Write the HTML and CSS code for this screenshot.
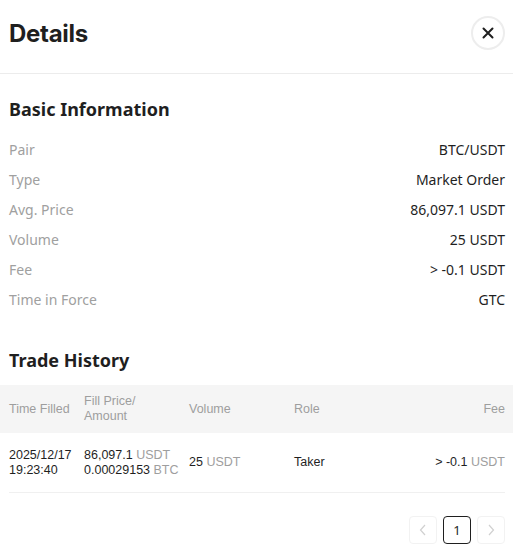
FILE: index.html
```html
<!DOCTYPE html>
<html lang="en">
<head>
    <meta charset="utf-8">
    <title>Details</title>
    <link rel="stylesheet" href="styles.css">
</head>
<body>
<div class="panel">
    <div class="panel-header">
        <h1 class="panel-title">Details</h1>
        <button class="close-btn" aria-label="Close">
            <svg width="14" height="14" viewBox="0 0 14 14">
                <path d="M2.5 2.5 L11.5 11.5 M11.5 2.5 L2.5 11.5" stroke="#1f1f1f" stroke-width="2" stroke-linecap="round"/>
            </svg>
        </button>
    </div>

    <div class="panel-body">
        <h2 class="section-title">Basic Information</h2>
        <div class="info-list">
            <div class="info-row"><span class="info-label">Pair</span><span class="info-value">BTC/USDT</span></div>
            <div class="info-row"><span class="info-label">Type</span><span class="info-value">Market Order</span></div>
            <div class="info-row"><span class="info-label">Avg. Price</span><span class="info-value">86,097.1 USDT</span></div>
            <div class="info-row"><span class="info-label">Volume</span><span class="info-value">25 USDT</span></div>
            <div class="info-row"><span class="info-label">Fee</span><span class="info-value">&gt; -0.1 USDT</span></div>
            <div class="info-row"><span class="info-label">Time in Force</span><span class="info-value">GTC</span></div>
        </div>

        <h2 class="section-title history-title">Trade History</h2>
    </div>

    <div class="trade-table">
        <div class="table-head">
            <div class="cell">Time Filled</div>
            <div class="cell">Fill Price/<br>Amount</div>
            <div class="cell">Volume</div>
            <div class="cell">Role</div>
            <div class="cell cell-right">Fee</div>
        </div>
        <div class="table-row">
            <div class="cell">2025/12/17<br>19:23:40</div>
            <div class="cell">86,097.1 <span class="unit">USDT</span><br>0.00029153 <span class="unit">BTC</span></div>
            <div class="cell">25 <span class="unit">USDT</span></div>
            <div class="cell">Taker</div>
            <div class="cell cell-right">&gt; -0.1 <span class="unit">USDT</span></div>
        </div>
    </div>

    <div class="pager">
        <button class="page-btn" disabled>
            <svg width="8" height="12" viewBox="0 0 8 12"><path d="M6 1 L1.5 6 L6 11" fill="none" stroke="#d0d0d0" stroke-width="1.2"/></svg>
        </button>
        <button class="page-btn active">1</button>
        <button class="page-btn" disabled>
            <svg width="8" height="12" viewBox="0 0 8 12"><path d="M2 1 L6.5 6 L2 11" fill="none" stroke="#d0d0d0" stroke-width="1.2"/></svg>
        </button>
    </div>
</div>
</body>
</html>
```

FILE: styles.css
```css
body {
    margin: 0;
    background: #fff;
    font-family: "Noto Sans", "Open Sans", sans-serif;
    color: #1f1f1f;
}

.panel {
    width: 513px;
}

.panel-header {
    display: flex;
    justify-content: space-between;
    align-items: flex-start;
    height: 74px;
    padding: 17px 8px 0 9px;
    box-sizing: border-box;
    border-bottom: 1px solid #ececec;
}

.panel-title {
    margin: 0;
    font-family: Inter, sans-serif;
    font-size: 24px;
    font-weight: 700;
    line-height: 34px;
    letter-spacing: -0.3px;
}

.close-btn {
    width: 34px;
    height: 34px;
    margin-top: -1px;
    padding: 0;
    border: 2px solid #ededed;
    border-radius: 50%;
    background: #fff;
    display: flex;
    align-items: center;
    justify-content: center;
    cursor: pointer;
}

.panel-body {
    padding: 0 8px 0 9px;
}

.section-title {
    margin: 22px 0 0;
    font-size: 18px;
    font-weight: 700;
    line-height: 26px;
}

.info-list {
    margin-top: 13px;
}

.info-row {
    display: flex;
    justify-content: space-between;
    height: 30px;
    line-height: 30px;
    font-size: 14px;
}

.info-label {
    color: #a0a0a0;
}

.history-title {
    margin-top: 32px;
}

/* the table uses an Arial-width face so two-line cells stay within 15px lines */
.trade-table {
    margin-top: 12px;
    font-family: "Liberation Sans", Arial, sans-serif;
    font-size: 12.5px;
}

.table-head,
.table-row {
    display: grid;
    grid-template-columns: 75px 105px 105px 1fr auto;
    align-items: center;
}

.table-head {
    height: 48px;
    padding: 0 8px 0 9px;
    background: #f5f5f5;
    color: #9e9e9e;
    line-height: 15px;
}

.table-row {
    height: 59px;
    margin: 0 8px 0 9px;
    border-bottom: 1px solid #f0f0f0;
    line-height: 15px;
}

.cell-right {
    text-align: right;
}

.unit {
    color: #9e9e9e;
}

.pager {
    display: flex;
    justify-content: flex-end;
    gap: 6px;
    margin-top: 23px;
    padding-right: 8px;
}

.page-btn {
    width: 28px;
    height: 28px;
    padding: 0;
    border: 1px solid #f2f2f2;
    border-radius: 4px;
    background: #fff;
    font-family: "Noto Sans", sans-serif;
    font-size: 13px;
    color: #1f1f1f;
    display: flex;
    align-items: center;
    justify-content: center;
}

.page-btn.active {
    border-color: #1f1f1f;
}
```
